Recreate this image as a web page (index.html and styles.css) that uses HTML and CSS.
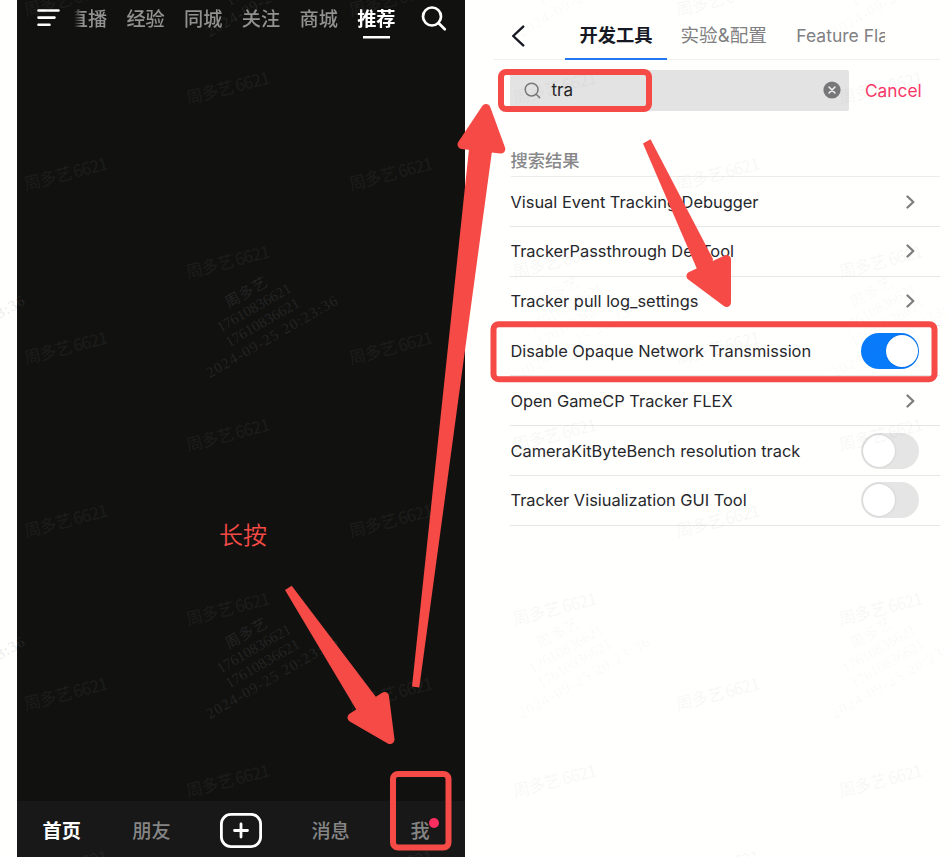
FILE: index.html
```html
<!DOCTYPE html>
<html lang="zh-CN">
<head>
<meta charset="utf-8">
<title>开发工具</title>
<link rel="stylesheet" href="styles.css">
</head>
<body>
<div class="stage">
  <section class="feed">
    <header class="feed-top">
      <svg class="menu-icon" width="24" height="20" viewBox="0 0 24 20"><path d="M1.5 2.5h20M1.5 9.6h16M1.5 16.7h11"/></svg>
      <nav class="feed-tabs">
        <span class="first">直播</span><span>经验</span><span>同城</span><span>关注</span><span>商城</span><span class="active">推荐</span>
      </nav>
      <svg class="find-icon" width="26" height="26" viewBox="0 0 26 26"><circle cx="11" cy="10.5" r="9"/><path d="M17.5 17l6.3 6.2"/></svg>
    </header>
    <div class="video"></div>
    <footer class="feed-bottom">
      <span class="active">首页</span>
      <span>朋友</span>
      <svg width="42" height="35" viewBox="0 0 42 35"><rect x="1.4" y="1.4" width="39.2" height="32.2" rx="9.5"/><path d="M21 11v13M14.5 17.5h13"/></svg>
      <span>消息</span>
      <span class="me">我<i class="dot"></i></span>
    </footer>
  </section>

  <section class="tools">
    <header class="tools-top">
      <svg class="back" width="14" height="22" viewBox="0 0 14 22"><path d="M12.2 1.6L2.2 11l10 9.4"/></svg>
      <nav class="tools-tabs">
        <span class="active">开发工具</span><span>实验&amp;配置</span><span class="cut">Feature Fla</span>
      </nav>
    </header>
    <div class="search-row">
      <div class="search">
        <svg width="17" height="17" viewBox="0 0 17 17"><circle cx="7.6" cy="7.6" r="6.4"/><path d="M12.2 12.2l3.4 3.4"/></svg>
        <span class="query">tra</span>
        <svg class="clear" width="18" height="18" viewBox="0 0 18 18"><circle cx="9" cy="9" r="8.6"/><path d="M6 6l6 6M12 6l-6 6"/></svg>
      </div>
      <span class="cancel">Cancel</span>
    </div>
    <h2>搜索结果</h2>
    <ul class="results">
      <li><span>Visual Event Tracking Debugger</span><svg class="chev" width="9" height="14" viewBox="0 0 9 14"><path d="M1.5 1.5L7.3 7l-5.8 5.5"/></svg></li>
      <li><span>TrackerPassthrough DevTool</span><svg class="chev" width="9" height="14" viewBox="0 0 9 14"><path d="M1.5 1.5L7.3 7l-5.8 5.5"/></svg></li>
      <li><span>Tracker pull log_settings</span><svg class="chev" width="9" height="14" viewBox="0 0 9 14"><path d="M1.5 1.5L7.3 7l-5.8 5.5"/></svg></li>
      <li><span>Disable Opaque Network Transmission</span><b class="switch on"></b></li>
      <li><span>Open GameCP Tracker FLEX</span><svg class="chev" width="9" height="14" viewBox="0 0 9 14"><path d="M1.5 1.5L7.3 7l-5.8 5.5"/></svg></li>
      <li><span>CameraKitByteBench resolution track</span><b class="switch"></b></li>
      <li><span>Tracker Visiualization GUI Tool</span><b class="switch"></b></li>
    </ul>
  </section>

  <svg class="overlay" width="947" height="857" viewBox="0 0 947 857">
    <defs>
      <g id="tag"><text transform="rotate(-14.5)" x="0" y="6" text-anchor="middle" textLength="86">周多艺 6621</text></g>
      <g id="stamp" transform="rotate(-30)">
        <text x="2" y="-28" text-anchor="middle" textLength="46">周多艺</text>
        <text x="1" y="-11" text-anchor="middle" textLength="83">17610836621</text>
        <text x="1" y="6" text-anchor="middle" textLength="83">17610836621</text>
        <text x="2" y="23" text-anchor="middle" textLength="149">2024-09-25 20:23:36</text>
      </g>
    </defs>
    <g class="tags dark">
      <use href="#tag" x="66" y="0"/><use href="#tag" x="66" y="174"/><use href="#tag" x="66" y="348"/><use href="#tag" x="66" y="521"/><use href="#tag" x="66" y="694"/><use href="#tag" x="66" y="867"/>
      <use href="#tag" x="228" y="88"/><use href="#tag" x="228" y="262"/><use href="#tag" x="228" y="435"/><use href="#tag" x="228" y="609"/><use href="#tag" x="228" y="781"/>
      <use href="#tag" x="391" y="0"/><use href="#tag" x="391" y="174"/><use href="#tag" x="391" y="348"/><use href="#tag" x="391" y="521"/><use href="#tag" x="391" y="694"/><use href="#tag" x="391" y="867"/>
    </g>
    <g class="tags light">
      <use href="#tag" x="555" y="88"/><use href="#tag" x="555" y="262"/><use href="#tag" x="555" y="435"/><use href="#tag" x="555" y="609"/><use href="#tag" x="555" y="781"/>
      <use href="#tag" x="718" y="0"/><use href="#tag" x="718" y="174"/><use href="#tag" x="718" y="348"/><use href="#tag" x="718" y="521"/><use href="#tag" x="718" y="694"/><use href="#tag" x="718" y="867"/>
      <use href="#tag" x="881" y="88"/><use href="#tag" x="881" y="262"/><use href="#tag" x="881" y="435"/><use href="#tag" x="881" y="609"/><use href="#tag" x="881" y="781"/>
    </g>
    <g class="stamps dark">
      <use href="#stamp" x="-52" y="-19"/><use href="#stamp" x="261" y="-19"/>
      <use href="#stamp" x="-52" y="322"/><use href="#stamp" x="261" y="322"/>
      <use href="#stamp" x="-52" y="663"/><use href="#stamp" x="261" y="663"/>
    </g>
    <g class="stamps light">
      <use href="#stamp" x="573" y="-19"/><use href="#stamp" x="886" y="-19"/>
      <use href="#stamp" x="573" y="322"/><use href="#stamp" x="886" y="322"/>
      <use href="#stamp" x="573" y="663"/><use href="#stamp" x="886" y="663"/>
    </g>
    <g class="frames">
      <rect x="393" y="774" width="55.5" height="73.5" rx="5"/>
      <rect x="501" y="72" width="148" height="37" rx="5"/>
      <rect x="493.5" y="324.2" width="441" height="55" rx="5"/>
    </g>
    <g class="shafts">
      <path d="M285 590L291.7 585.7 376 697 370 720 356.5 710z"/>
      <path d="M412 686.4L419.3 687.6 492 151 481 130 469 149z"/>
      <path d="M643 143.5L650.5 139.3 713 259 710 280 697 269z"/>
    </g>
    <g class="heads">
      <path d="M384.5 696.5L390 739.5 352 717.5z"/>
      <path d="M486 108.5L500.8 149 462 144.5z"/>
      <path d="M726.5 259.5V302.5L691 276z"/>
    </g>
    <text class="note" x="219" y="543.5">长按</text>
  </svg>
</div>
</body>
</html>
```
FILE: styles.css
```css
* { box-sizing: border-box; }
body { margin: 0; background: #fffffd; font-family: Inter, "Noto Sans CJK SC", sans-serif; }
.stage { position: relative; display: flex; width: 947px; height: 857px; overflow: hidden; padding-left: 17px; }
svg { display: block; flex: none; fill: none; stroke-linecap: round; stroke-linejoin: round; }

.feed { width: 448px; height: 857px; display: flex; flex-direction: column; background: #111110; font-family: "Noto Sans CJK SC", sans-serif; }
.feed-top { display: flex; align-items: flex-start; height: 50px; padding-left: 20px; }
.menu-icon { margin-top: 8px; stroke: #fff; stroke-width: 2.6; }
.feed-tabs { display: flex; justify-content: flex-end; gap: 19.3px; width: 322px; margin-left: 12.5px; overflow: hidden; font-size: 19.2px; line-height: 36px; height: 42px; color: #929292; font-weight: 500; -webkit-mask-image: linear-gradient(90deg, transparent, #000 8px); mask-image: linear-gradient(90deg, transparent, #000 8px); }
.feed-tabs span { flex: none; }
.feed-tabs .active { color: #fff; font-weight: 700; background: linear-gradient(#fff, #fff) 50% 36px / 27px 2.5px no-repeat; }
.find-icon { margin: 6px 0 0 25px; stroke: #fff; stroke-width: 2.7; }
.video { flex: 1; }
.feed-bottom { height: 56px; display: grid; grid-template-columns: repeat(5, 1fr); place-items: center; background: #181818; color: #858585; font-size: 19.2px; font-weight: 500; padding-top: 2px; }
.feed-bottom .active { color: #fff; font-weight: 700; }
.feed-bottom svg { stroke: #fff; stroke-width: 2.8; }
.me { position: relative; }
.dot { position: absolute; left: 18.5px; top: 2px; width: 10px; height: 10px; border-radius: 50%; background: #fb2e62; }

.tools { width: 447px; margin-left: 28px; }
.tools-top { height: 60px; display: flex; padding-left: 18px; border-bottom: 1px solid #f1f1f1; }
.back { margin-top: 25px; stroke: #161823; stroke-width: 2.4; }
.tools-tabs { display: flex; width: 362px; margin-left: 40px; overflow: hidden; height: 60px; line-height: 71px; font-size: 18.6px; color: #808083; }
.tools-tabs span { flex: none; white-space: nowrap; }
.tools-tabs .active { width: 102px; text-align: center; color: #161823; font-weight: 600; font-size: 18.3px; border-bottom: 2px solid #2178f0; margin-right: 13.5px; }
.tools-tabs .cut { width: 89px; overflow: hidden; margin-left: 29.5px; font-size: 17.5px; }
.search-row { display: flex; align-items: center; margin: 9.5px 0 0 17px; height: 41px; }
.search { width: 339px; height: 41px; display: flex; align-items: center; padding: 0 8px 0 14px; background: #e3e3e3; border-radius: 2px; stroke: #777; }
.search > svg { stroke-width: 1.5; }
.query { margin-left: 10.5px; flex: 1; font-size: 17px; color: #222; stroke: none; }
.clear circle { fill: #77777a; stroke: none; }
.clear path { stroke: #eee; stroke-width: 1.6; }
.cancel { margin-left: 16px; font-size: 17.3px; color: #f93668; }
h2 { margin: 0 0 0 17.5px; height: 66.5px; padding-top: 38px; line-height: 24px; font-size: 17.3px; font-weight: 500; color: #88888a; border-bottom: 1px solid #ededed; }
.results { margin: 0 0 0 17px; padding: 0; list-style: none; font-size: 16.4px; color: #26272c; }
.results li { height: 49.8px; display: flex; align-items: center; justify-content: space-between; border-bottom: 1px solid #e7e7e7; padding: .6px 21px 0 .5px; }
.results span { white-space: nowrap; }
.chev { margin-right: 4px; stroke: #7e7e80; stroke-width: 2.3; }
.switch { width: 58px; height: 36px; border-radius: 18px; background: #e5e5e5; padding: 2px; }
.switch::before { content: ""; display: block; width: 32px; height: 32px; border-radius: 50%; background: #fff; box-shadow: 0 0 2px #0003; }
.switch.on { background: #087bfb; }
.switch.on::before { margin-left: 23px; }

.overlay { position: absolute; left: 0; top: 0; }
.overlay text { stroke: none; }
.tags { font: 500 17px "Noto Sans CJK SC", sans-serif; }
.stamps { font: 15px "Liberation Serif", "Noto Sans CJK SC", serif; }
.tags.dark { fill: rgba(128,128,128,.1); }
.tags.light { fill: rgba(128,128,128,.06); }
.stamps.dark { fill: rgba(128,128,128,.19); }
.stamps.light { fill: rgba(128,128,128,.06); }
.frames { stroke: #f54a45; stroke-width: 6; }
.shafts { fill: #f54a45; }
.heads { fill: #f54a45; stroke: #f54a45; stroke-width: 9; }
.note { fill: #f54a45; font: 350 24px "Noto Sans CJK SC", sans-serif; }
```
